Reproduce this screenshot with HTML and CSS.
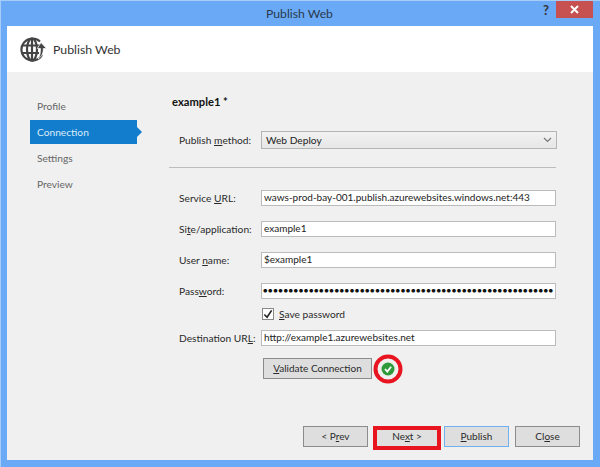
FILE: index.html
```html
<!DOCTYPE html>
<html lang="en">
<head>
<meta charset="utf-8">
<title>Publish Web</title>
<link rel="stylesheet" href="styles.css">
</head>
<body>
<div class="window">
  <div class="titlebar">
    <span class="title">Publish Web</span>
    <span class="help">?</span>
    <span class="close-x">
      <svg width="9" height="9" viewBox="0 0 9 9"><path d="M1 1l7 7M8 1l-7 7" stroke="#fff" stroke-width="2" fill="none"/></svg>
    </span>
  </div>
  <div class="client">
    <div class="header">
      <svg class="globe" width="27" height="25" viewBox="0 0 27 25">
        <g fill="none" stroke="#444" stroke-width="2.2">
          <path d="M20 4.500A11 11 0 1 0 22 18"/>
          <ellipse cx="12" cy="12.500" rx="5" ry="11"/>
          <path d="M2 8.500h19M2 16h17"/>
          <path d="M12 2v21"/>
        </g>
        <path d="M21 5.500l5.500 6h-3.200c0 5-1.500 8-5.300 10.500c2-3 2.500-6 2.500-10.500h-3.200z" fill="#444" stroke="#fff" stroke-width="0.7"/>
      </svg>
      <span class="header-title">Publish Web</span>
    </div>
    <div class="body">
      <nav class="steps">
        <div class="step">Profile</div>
        <div class="step active">Connection</div>
        <div class="step">Settings</div>
        <div class="step">Preview</div>
      </nav>
      <main class="panel">
        <h1 class="profile-name">example1 *</h1>
        <div class="row method-row">
          <label class="label">Publish <u>m</u>ethod:</label>
          <div class="select"><span>Web Deploy</span>
            <svg width="9" height="6" viewBox="0 0 9 6"><path d="M1 1l3.500 3.500L8 1" stroke="#777" stroke-width="1.200" fill="none"/></svg>
          </div>
        </div>
        <hr class="rule">
        <div class="row"><label class="label">Service <u>U</u>RL:</label><div class="input">waws-prod-bay-001.publish.azurewebsites.windows.net:443</div></div>
        <div class="row"><label class="label">Si<u>t</u>e/application:</label><div class="input">example1</div></div>
        <div class="row"><label class="label">User <u>n</u>ame:</label><div class="input">$example1</div></div>
        <div class="row"><label class="label">Pass<u>w</u>ord:</label><div class="input dots">●●●●●●●●●●●●●●●●●●●●●●●●●●●●●●●●●●●●●●●●●●●●●●●●●●●●●●●●●</div></div>
        <div class="check-row">
          <span class="checkbox"><svg width="11" height="11" viewBox="0 0 11 11"><path d="M1.500 5.500l3 3 5-7.500" stroke="#222" stroke-width="1.800" fill="none"/></svg></span>
          <span><u>S</u>ave password</span>
        </div>
        <div class="row dest-row"><label class="label">Destination UR<u>L</u>:</label><div class="input">http://example1.azurewebsites.net</div></div>
        <div class="validate-row">
          <button class="btn validate"><u>V</u>alidate Connection</button>
          <span class="status">
            <svg width="30" height="30" viewBox="0 0 30 30">
              <circle cx="15" cy="15" r="12.500" fill="none" stroke="#e8141f" stroke-width="4"/>
              <circle cx="15" cy="15" r="6.500" fill="#2e9a3a"/>
              <path d="M12 15l2.300 2.500 3.800-4.700" stroke="#fff" stroke-width="1.800" fill="none"/>
            </svg>
          </span>
        </div>
      </main>
    </div>
    <div class="footer">
      <button class="btn prev">&lt; P<u>r</u>ev</button>
      <button class="btn next">Ne<u>x</u>t &gt;</button>
      <button class="btn publish"><u>P</u>ublish</button>
      <button class="btn close">Cl<u>o</u>se</button>
    </div>
  </div>
</div>
</body>
</html>
```
FILE: styles.css
```css
* { box-sizing: border-box; }
html, body { margin: 0; padding: 0; }
body {
  width: 600px;
  height: 467px;
  overflow: hidden;
  background: #fff;
  font-family: "Lato", "Noto Sans", sans-serif;
  font-size: 10.200px;
  color: #222;
}
u { text-underline-offset: 1px; }
.window {
  width: 600px;
  height: 467px;
  background: #69a9f5;
  display: flex;
  flex-direction: column;
  padding: 0 6px 7px 6px;
  border-left: 1px solid #a8ccf8;
  border-top: 1px solid #a8ccf8;
}
.titlebar {
  height: 25px;
  display: flex;
  align-items: flex-start;
  justify-content: center;
  position: relative;
  flex: none;
}
.title {
  font-size: 12.200px;
  line-height: 25px;
  color: #2b3a4d;
  margin-left: -2px;
}
.help {
  position: absolute;
  left: 536px;
  top: 1px;
  font-weight: 700;
  font-size: 13px;
  line-height: 16px;
  color: #333;
}
.close-x {
  position: absolute;
  left: 549px;
  top: 0;
  width: 37px;
  height: 17px;
  background: #c75050;
  display: flex;
  align-items: center;
  justify-content: center;
}
.client {
  flex: 1;
  background: #f0f0f0;
  display: flex;
  flex-direction: column;
  width: 586px;
  position: relative;
}
.header {
  height: 46px;
  flex: none;
  background: #fff;
  display: flex;
  align-items: center;
  padding: 1px 0 0 13px;
  gap: 6px;
}
.header-title { font-size: 12.300px; color: #333; }
.globe { flex: none; }
.body {
  flex: 1;
  display: flex;
  min-height: 0;
}
.steps {
  width: 112px;
  padding: 22px 0 0 23px;
  flex: none;
}
.step {
  height: 24px;
  width: 107px;
  margin-bottom: 2px;
  line-height: 24px;
  padding-left: 7px;
  color: #666;
  position: relative;
}
.step.active {
  background: #117dcc;
  color: #dcecf8;
}
.step.active::after {
  content: "";
  position: absolute;
  left: 100%;
  top: 7px;
  border-left: 5px solid #117dcc;
  border-top: 5px solid transparent;
  border-bottom: 5px solid transparent;
}
.panel {
  flex: 1;
  padding: 22px 37px 0 53px;
  min-width: 0;
}
.profile-name {
  margin: 0;
  font-size: 11.200px;
  font-weight: 700;
  line-height: 16px;
  color: #111;
}
.row {
  display: flex;
  align-items: center;
  height: 16px;
  margin-top: 15px;
  padding-left: 7px;
}
.method-row { height: 18px; margin-top: 21px; }
.label { width: 82px; flex: none; color: #2a2a2a; white-space: nowrap; }
.input {
  flex: 1;
  height: 16px;
  background: #fff;
  border: 1px solid #bbb;
  line-height: 13px;
  padding-left: 2px;
  font-size: 10px;
  color: #222;
  white-space: nowrap;
  overflow: hidden;
}
.dots { font-size: 7.500px; letter-spacing: 0.600px; color: #111; line-height: 13px; padding-left: 1px; }
.select {
  flex: 1;
  height: 18px;
  margin-right: -1px;
  border: 1px solid #b5b5b5;
  background: linear-gradient(#f2f2f2, #e6e6e6);
  display: flex;
  align-items: center;
  justify-content: space-between;
  padding: 0 4px;
  color: #222;
}
.rule {
  margin: 18px 0 0 -3px;
  border: 0;
  border-top: 1px solid #bdbdbd;
  height: 1px;
}
.rule + .row { margin-top: 22px; }
.check-row {
  display: flex;
  align-items: center;
  gap: 5px;
  margin: 8px 0 0 90px;
  height: 14px;
  color: #2a2a2a;
}
.checkbox {
  width: 12px;
  height: 12px;
  border: 1px solid #888;
  background: #fff;
  display: flex;
  align-items: center;
  justify-content: center;
  flex: none;
}
.dest-row { margin-top: 9px; }
.validate-row {
  display: flex;
  align-items: center;
  margin: 12px 0 0 91px;
  position: relative;
}
.btn {
  font: inherit;
  font-size: 10px;
  color: #2a2a2a;
  background: #dedede;
  border: 1px solid #8c8c8c;
  padding: 0 0 1px;
  height: 21px;
}
.validate { width: 109px; }
.status {
  margin-left: 1px;
  display: flex;
  height: 21px;
  align-items: center;
}
.footer {
  flex: none;
  height: 34px;
  display: flex;
  padding-left: 296px;
  align-items: flex-start;
}
.prev { width: 65px; }
.next {
  width: 68px;
  height: 24px;
  margin-left: 5px;
  border: 4px solid #e8141f;
  background: #e0e0e0;
  padding-bottom: 4px;
}
.publish {
  width: 65px;
  margin-left: 3px;
  border-color: #6fb0ee;
}
.close { width: 65px; margin-left: 6px; }
```
